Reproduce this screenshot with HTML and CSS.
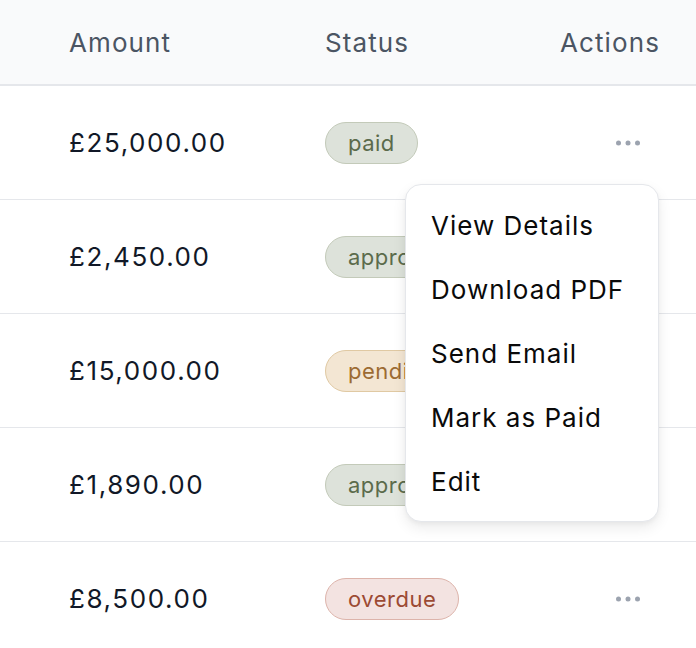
FILE: index.html
```html
<!DOCTYPE html>
<html lang="en">
<head>
<meta charset="utf-8">
<title>Invoices</title>
<link rel="stylesheet" href="styles.css">
</head>
<body>
<div class="table">
  <div class="row head">
    <div class="cell">Amount</div>
    <div class="cell">Status</div>
    <div class="cell actions">Actions</div>
  </div>
  <div class="row">
    <div class="cell amount">£25,000.00</div>
    <div class="cell"><span class="badge paid">paid</span></div>
    <div class="cell actions"><button class="dots" aria-label="More actions"><svg width="26" height="8" viewBox="0 0 26 8"><circle cx="3.5" cy="4" r="2.5"/><circle cx="13" cy="4" r="2.5"/><circle cx="22.5" cy="4" r="2.5"/></svg></button></div>
  </div>
  <div class="row">
    <div class="cell amount">£2,450.00</div>
    <div class="cell"><span class="badge approved">approved</span></div>
    <div class="cell actions"><button class="dots" aria-label="More actions"><svg width="26" height="8" viewBox="0 0 26 8"><circle cx="3.5" cy="4" r="2.5"/><circle cx="13" cy="4" r="2.5"/><circle cx="22.5" cy="4" r="2.5"/></svg></button></div>
  </div>
  <div class="row">
    <div class="cell amount">£15,000.00</div>
    <div class="cell"><span class="badge pending">pending</span></div>
    <div class="cell actions"><button class="dots" aria-label="More actions"><svg width="26" height="8" viewBox="0 0 26 8"><circle cx="3.5" cy="4" r="2.5"/><circle cx="13" cy="4" r="2.5"/><circle cx="22.5" cy="4" r="2.5"/></svg></button></div>
  </div>
  <div class="row">
    <div class="cell amount">£1,890.00</div>
    <div class="cell"><span class="badge approved">approved</span></div>
    <div class="cell actions"><button class="dots" aria-label="More actions"><svg width="26" height="8" viewBox="0 0 26 8"><circle cx="3.5" cy="4" r="2.5"/><circle cx="13" cy="4" r="2.5"/><circle cx="22.5" cy="4" r="2.5"/></svg></button></div>
  </div>
  <div class="row">
    <div class="cell amount">£8,500.00</div>
    <div class="cell"><span class="badge overdue">overdue</span></div>
    <div class="cell actions"><button class="dots" aria-label="More actions"><svg width="26" height="8" viewBox="0 0 26 8"><circle cx="3.5" cy="4" r="2.5"/><circle cx="13" cy="4" r="2.5"/><circle cx="22.5" cy="4" r="2.5"/></svg></button></div>
  </div>
  <ul class="menu">
    <li>View Details</li>
    <li>Download PDF</li>
    <li>Send Email</li>
    <li>Mark as Paid</li>
    <li>Edit</li>
  </ul>
</div>
</body>
</html>
```
FILE: styles.css
```css
* { box-sizing: border-box; }
html, body { margin: 0; padding: 0; background: #ffffff; }
body {
  font-family: Inter, "Noto Sans", "Liberation Sans", sans-serif;
  overflow: hidden;
}
.table {
  position: relative;
  width: 696px;
}
.row {
  display: grid;
  grid-template-columns: 256px 1fr auto;
  align-items: center;
  padding: 0 37px 0 69px;
  height: 114px;
  border-bottom: 1px solid #e5e7eb;
}
.row.head {
  height: 86px;
  background: #f9fafb;
  border-bottom: 2px solid #e5e7eb;
  color: #4b5563;
  font-size: 26px;
  letter-spacing: 1.1px;
  font-weight: 400;
}
.cell.actions { justify-self: end; }
.row.head .cell.actions { margin-right: -1px; }
.amount {
  font-size: 26px;
  color: #111827;
  letter-spacing: 1.6px;
}
.badge {
  display: inline-block;
  font-size: 22px;
  line-height: 26px;
  letter-spacing: 0.5px;
  padding: 7px 22px;
  border-radius: 999px;
  border: 1.5px solid;
}
.badge.paid, .badge.approved {
  background: #dde2da;
  border-color: #c3cab9;
  color: #5b6b4b;
}
.badge.pending {
  background: #f3e6d3;
  border-color: #e0c9a3;
  color: #9c6b32;
}
.badge.overdue {
  background: #f3e3e1;
  border-color: #ddb4ab;
  color: #9c4a33;
}
.dots {
  display: flex;
  align-items: center;
  justify-content: center;
  background: none;
  border: 0;
  padding: 8px;
  margin-right: 10px;
  fill: #9ca3af;
  cursor: pointer;
}
.dots svg { display: block; }
.menu {
  position: absolute;
  top: 184px;
  left: 405px;
  width: 254px;
  margin: 0;
  padding: 8px 0;
  list-style: none;
  background: #ffffff;
  border: 1px solid #e5e7eb;
  border-radius: 16px;
  box-shadow: 0 6px 14px rgba(0, 0, 0, 0.08), 0 2px 4px rgba(0, 0, 0, 0.04);
}
.menu li {
  height: 64px;
  display: flex;
  align-items: center;
  padding: 0 25px;
  font-size: 26px;
  letter-spacing: 1px;
  color: #0a0a0a;
}
```
